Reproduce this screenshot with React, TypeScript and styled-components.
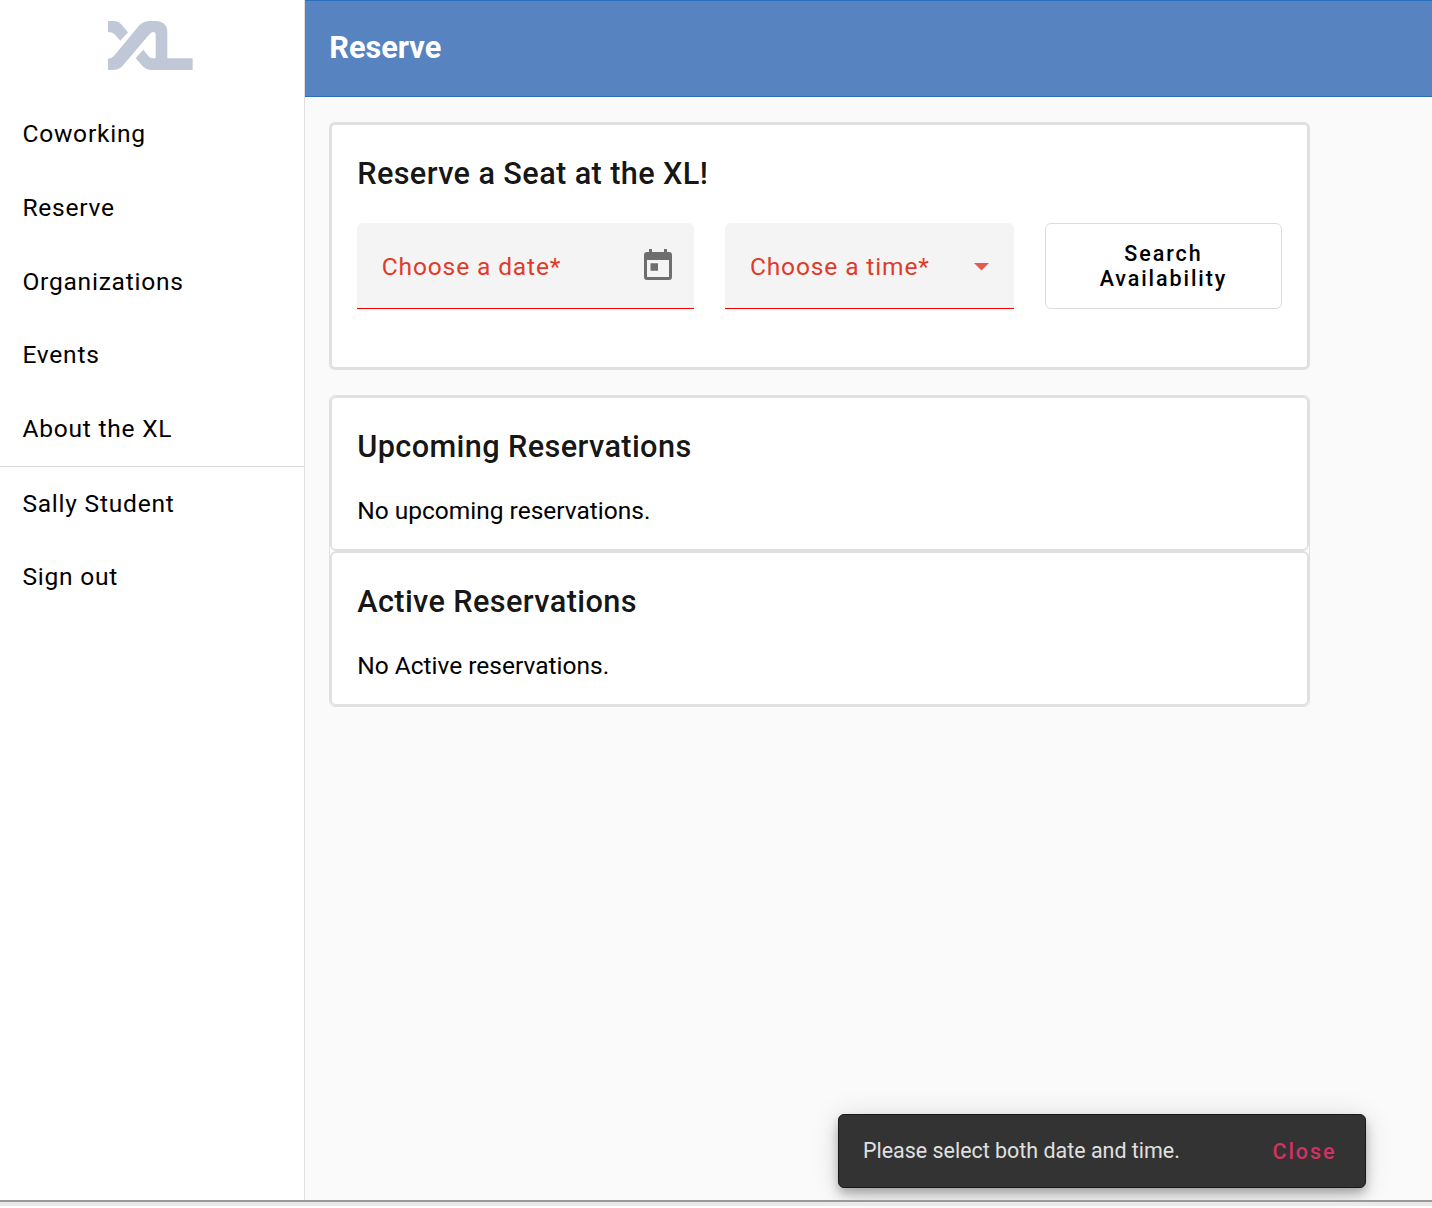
import React from "react";
import styled, { createGlobalStyle } from "styled-components";

const Global = createGlobalStyle`
  * { box-sizing: border-box; }
  body { margin: 0; background: #fff; font-family: Roboto, "Liberation Sans", sans-serif; color: #000; }
  h1, h2, p { margin: 0; }
`;

const Page = styled.div`
  position: relative;
  display: flex;
  flex-direction: column;
  width: 1432px;
  height: 1208px;
  overflow: hidden;
`;

const Shell = styled.div`
  display: flex;
  height: 1200px;
`;

const WindowEdge = styled.div`
  height: 6px;
  background: #eaeaea;
  border-top: 2px solid #999;
  z-index: 2;
`;

const Sidebar = styled.aside`
  width: 304.6px;
  flex: none;
  background: #fff;
  border-right: 1.5px solid #dfdfdf;
`;

const LogoBox = styled.div`
  height: 97.4px;
  padding: 21px 0 0 108px;
  svg { display: block; }
`;

const NavGroup = styled.nav<{ $divided?: boolean }>`
  display: flex;
  flex-direction: column;
  border-top: ${(p) => (p.$divided ? "1.5px solid #dadada" : "none")};
`;

const NavItem = styled.a`
  display: flex;
  align-items: center;
  height: 73.7px;
  padding-left: 22.4px;
  font-size: 24.56px;
  line-height: 36px;
  letter-spacing: 0.77px;
`;

const Main = styled.main`
  flex: 1;
  background: #fafafa;
`;

const Header = styled.header`
  display: flex;
  align-items: center;
  height: 97px;
  padding: 0 0 2px 24.7px;
  background: #5783c0;
  border-top: 1px solid #296fbc;
  border-bottom: 1px solid #296fbc;
`;

const PageTitle = styled.h1`
  color: #fff;
  font-size: 30.7px;
  font-weight: 700;
  line-height: 49px;
`;

const Content = styled.div`
  display: flex;
  flex-direction: column;
  gap: 25px;
  width: 981px;
  margin: 25px 0 0 24.6px;
`;

const Panel = styled.section<{ $height: number }>`
  height: ${(p) => p.$height}px;
  background: #fff;
  border: 3px solid #e0e0e0;
  border-radius: 6px;
  padding: 24px 25px;
`;

const Stack = styled.div`
  background: #fff;
  border: 1px solid #e0e0e0;
  border-radius: 6px;
`;

const StackCard = styled.section`
  height: 155px;
  padding: 24px 25px;
  border: 2px solid #e0e0e0;
  border-radius: 6px;
`;

const Heading = styled.h2`
  color: rgba(0, 0, 0, 0.92);
  font-size: 30.7px;
  font-weight: 500;
  line-height: 49px;
  letter-spacing: 0.38px;
`;

const Note = styled.p`
  margin-top: 24px;
  font-size: 24.5px;
  line-height: 31px;
`;

const FormRow = styled.div`
  display: flex;
  margin-top: 25px;
  gap: 31px;
`;

const Field = styled.div<{ $width: number; $end: number }>`
  display: flex;
  align-items: center;
  justify-content: space-between;
  width: ${(p) => p.$width}px;
  height: 86px;
  padding: 0 ${(p) => p.$end}px 0 24.5px;
  background: #f4f4f4;
  border-bottom: 1.5px solid #f00000;
  border-radius: 6px 6px 0 0;
`;

const FieldLabel = styled.span`
  padding-top: 1px;
  color: #e23a2a;
  font-size: 24.56px;
  letter-spacing: 0.86px;
`;

const SearchButton = styled.button`
  width: 238px;
  height: 86px;
  padding: 0 24px;
  background: #fff;
  border: 1px solid #dcdcdc;
  border-radius: 6px;
  font-family: inherit;
  font-size: 21.5px;
  font-weight: 500;
  line-height: 25.2px;
  letter-spacing: 1.92px;
  color: #000;
`;

const Snackbar = styled.div`
  position: absolute;
  left: 838px;
  top: 1114px;
  display: flex;
  align-items: center;
  justify-content: space-between;
  width: 528px;
  height: 74px;
  padding: 0 28.6px 0 24px;
  background: #333;
  border: 1px solid #181818;
  border-radius: 6px;
  box-shadow: 0 5px 8px -1px rgba(0, 0, 0, 0.2), 0 9px 15px rgba(0, 0, 0, 0.14), 0 2px 28px rgba(0, 0, 0, 0.12);
`;

const Message = styled.span`
  padding-bottom: 2px;
  color: #e0e0e0;
  font-size: 21.45px;
`;

const CloseButton = styled.button`
  padding: 0;
  border: 0;
  background: none;
  font-family: inherit;
  font-size: 21.5px;
  font-weight: 500;
  letter-spacing: 1.92px;
  color: #d13163;
`;

const Logo = () => (
  <svg width="85" height="49" viewBox="54 63 255 147" fill="#c0c8d8">
    <path d="M54 63H74Q86 64 94 73L114 97L91 122L72 101Q66 96 54 96Z" />
    <path d="M54 176Q64 176 71 169L148 76Q161 63 180 63H198Q232 65 232 97V175H308V210H182Q168 209 158 199L137 174L160 149L177 170Q182 175 190 175H197V104Q197 96 190 96Q184 96 179 102L98 197Q86 210 68 210H54Z" />
  </svg>
);

const CalendarIcon = () => (
  <svg width="32" height="34" viewBox="642 249 32 34" fill="#6e6e6e">
    <path fillRule="evenodd" d="M649 249h3v3h12v-3h3v3h2a3 3 0 0 1 3 3v22a3 3 0 0 1-3 3h-22a3 3 0 0 1-3-3v-22a3 3 0 0 1 3-3h2zM647 260v17h22v-17zM650.500 263.300h7.500v7.500h-7.500z" />
  </svg>
);

const ArrowIcon = () => (
  <svg width="15" height="10" viewBox="0 -2 15 10" fill="#e85a4d">
    <path d="M0 0h15L7.500 7.500z" />
  </svg>
);

const links = ["Coworking", "Reserve", "Organizations", "Events", "About the XL"];
const account = ["Sally Student", "Sign out"];

export default function App() {
  return (
    <Page>
      <Global />
      <Shell>
        <Sidebar>
          <LogoBox><Logo /></LogoBox>
          <NavGroup>{links.map((l) => <NavItem key={l}>{l}</NavItem>)}</NavGroup>
          <NavGroup $divided>{account.map((l) => <NavItem key={l}>{l}</NavItem>)}</NavGroup>
        </Sidebar>
        <Main>
          <Header><PageTitle>Reserve</PageTitle></Header>
          <Content>
            <Panel $height={248}>
              <Heading>Reserve a Seat at the XL!</Heading>
              <FormRow>
                <Field $width={338} $end={20.5}><FieldLabel>Choose a date*</FieldLabel><CalendarIcon /></Field>
                <Field $width={289} $end={24.3}><FieldLabel>Choose a time*</FieldLabel><ArrowIcon /></Field>
                <SearchButton>Search Availability</SearchButton>
              </FormRow>
            </Panel>
            <Stack>
              <StackCard>
                <Heading>Upcoming Reservations</Heading>
                <Note>No upcoming reservations.</Note>
              </StackCard>
              <StackCard>
                <Heading>Active Reservations</Heading>
                <Note>No Active reservations.</Note>
              </StackCard>
            </Stack>
          </Content>
        </Main>
      </Shell>
      <WindowEdge />
      <Snackbar>
        <Message>Please select both date and time.</Message>
        <CloseButton>Close</CloseButton>
      </Snackbar>
    </Page>
  );
}
